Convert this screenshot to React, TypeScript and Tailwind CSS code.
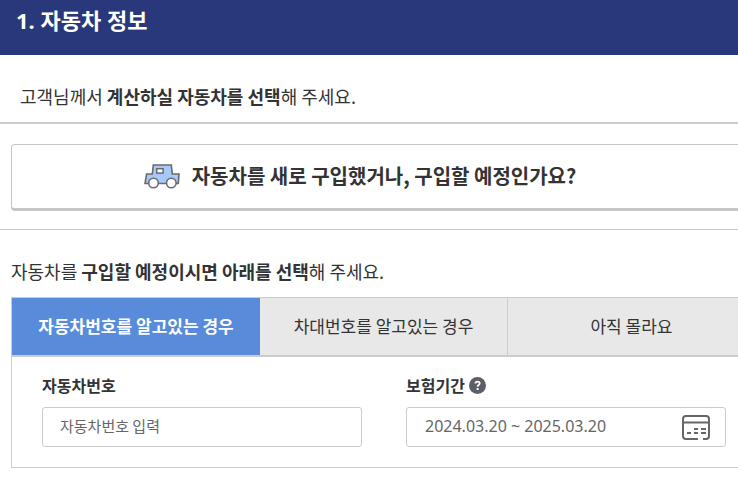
import { useState } from 'react';

const tabs = [
  '자동차번호를 알고있는 경우',
  '차대번호를 알고있는 경우',
  '아직 몰라요',
];

function CarIcon() {
  return (
    <svg width="36" height="26" viewBox="0 0 36 26" fill="none" aria-hidden>
      <path
        d="M1 20.5 L2.6 11 H8.3 L9.3 2 H27.3 L28.3 11 H35 L34.3 20.5 Z"
        fill="#a9c8fa"
        stroke="#6b6b6b"
        strokeWidth="1.6"
      />
      <rect x="12.7" y="5.7" width="6.4" height="4.4" fill="#fff" stroke="#6b6b6b" strokeWidth="1.5" />
      <circle cx="9.5" cy="20" r="4.8" fill="#fff" stroke="#6b6b6b" strokeWidth="1.6" />
      <circle cx="27.3" cy="20" r="4.8" fill="#fff" stroke="#6b6b6b" strokeWidth="1.6" />
    </svg>
  );
}

function CalendarIcon() {
  return (
    <svg width="28" height="25" viewBox="0 0 28 25" fill="none" stroke="#666" strokeWidth="2" aria-hidden>
      <path d="M16 24 H4 Q1 24 1 21 V4 Q1 1 4 1 H24 Q27 1 27 4 V21 Q27 24 24 24 H21" />
      <path d="M1 7.5 H27" />
      <path d="M12 14 H16 M19 14 H24 M5 18 H9 M12 18 H16 M19 18 H24" />
    </svg>
  );
}

function HelpIcon() {
  return (
    <svg width="17" height="17" viewBox="0 0 17 17" fill="none" aria-hidden>
      <circle cx="8.5" cy="8.5" r="8.5" fill="#5c5f66" />
      <path
        d="M6.4 6.5 Q6.5 4.6 8.6 4.6 Q10.7 4.6 10.7 6.3 Q10.7 7.3 9.6 8 Q8.6 8.6 8.6 9.8"
        stroke="#fff"
        strokeWidth="1.8"
      />
      <rect x="7.6" y="11" width="2" height="2" fill="#fff" />
    </svg>
  );
}

export default function App() {
  const [active, setActive] = useState(0);
  const [carNumber, setCarNumber] = useState('');

  return (
    <main className="overflow-x-hidden bg-white pb-4 font-['Noto_Sans_CJK_KR',sans-serif] text-[#333]">
      <header className="bg-[#29387a] px-4 pt-[5px] pb-[19px]">
        <h1 className="font-['Noto_Sans','Noto_Sans_CJK_KR',sans-serif] text-[22px] leading-[31px] font-bold text-white">
          1. 자동차 정보
        </h1>
      </header>

      <p className="border-b-2 border-[#ccc] px-5 pt-[27px] pb-3 text-lg leading-7">
        고객님께서 <strong>계산하실 자동차를 선택</strong>해 주세요.
      </p>

      <div className="border-b border-[#ccc] pt-5 pb-[18px] pl-[11px]">
        <div className="-mr-[19px]">
          <button
            type="button"
            className="flex w-full items-center justify-center gap-3 rounded border border-b-3 border-[#c6c6c6] pt-4 pb-[17px] pr-12 text-xl leading-[30px] font-bold"
          >
            <CarIcon />
            자동차를 새로 구입했거나, 구입할 예정인가요?
          </button>
        </div>
      </div>

      <section className="pt-[27px] pl-[11px]">
        <p className="pb-3 text-lg leading-7">
          자동차를 <strong>구입할 예정이시면 아래를 선택</strong>해 주세요.
        </p>
        <div className="-mr-[19px] border border-[#ccc]">
          <div role="tablist" className="grid grid-cols-3 border-b-2 border-[#ccc]">
            {tabs.map((tab, idx) => (
              <button
                key={tab}
                type="button"
                role="tab"
                aria-selected={active === idx}
                onClick={() => setActive(idx)}
                className={
                  active === idx
                    ? 'bg-[#588bda] pt-[15px] pb-[17px] text-[17px] leading-[25px] font-bold text-white'
                    : 'border-r border-[#ccc] bg-[#e8e8e8] pt-[15px] pb-[17px] text-[17px] leading-[25px]'
                }
              >
                {tab}
              </button>
            ))}
          </div>

          <div className="grid grid-cols-2 gap-11 px-[30px] pt-4 pb-5">
            <div>
              <label htmlFor="car-number" className="flex h-6 items-center text-base font-bold">
                자동차번호
              </label>
              <input
                id="car-number"
                value={carNumber}
                onChange={(e) => setCarNumber(e.target.value)}
                placeholder="자동차번호 입력"
                className="mt-[10px] h-10 w-full rounded-[3px] border border-[#ccc] px-[17px] pb-1 text-[15px] placeholder:text-[#666]"
              />
            </div>
            <div>
              <div className="flex h-6 items-center gap-1">
                <label htmlFor="period" className="text-base font-bold">
                  보험기간
                </label>
                <button type="button" aria-label="도움말">
                  <HelpIcon />
                </button>
              </div>
              <div className="mt-[10px] flex h-10 items-center rounded-[3px] border border-[#ccc] pr-[15px] pl-[18px]">
                <input
                  id="period"
                  defaultValue="2024.03.20 ~ 2025.03.20"
                  className="min-w-0 flex-1 pb-0.5 font-['Noto_Sans',sans-serif] text-base text-[#666]"
                />
                <button type="button" aria-label="달력 열기">
                  <CalendarIcon />
                </button>
              </div>
            </div>
          </div>
        </div>
      </section>
    </main>
  );
}
